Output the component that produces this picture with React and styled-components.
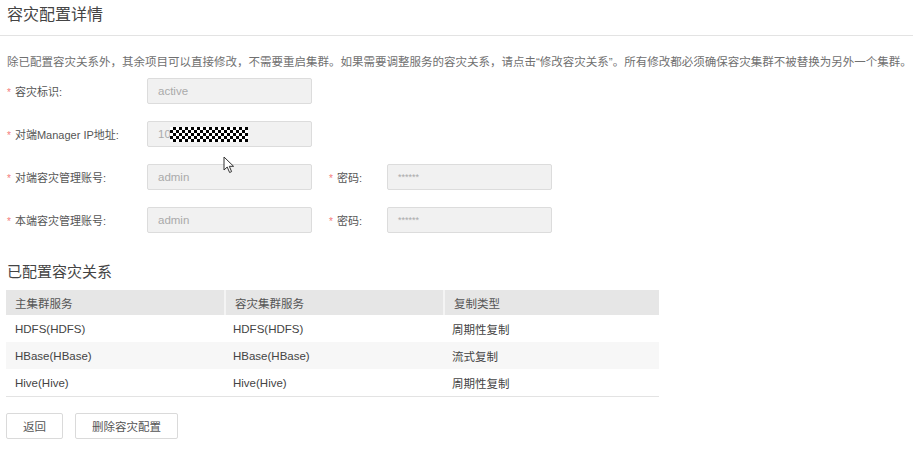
import React from "react";
import styled, { createGlobalStyle } from "styled-components";

const GlobalStyle = createGlobalStyle`
  html, body {
    margin: 0;
    padding: 0;
    background: #ffffff;
  }
  body {
    font-family: "Liberation Sans", "Noto Sans CJK SC", Arial, sans-serif;
    color: #444;
  }
`;

const Page = styled.div`
  position: relative;
  width: 913px;
  height: 449px;
  overflow: hidden;
  background: #fff;
`;

const Header = styled.div`
  height: 35px;
  border-bottom: 1px solid #e3e3e3;
  padding-left: 7px;
  display: flex;
  align-items: center;
`;

const Title = styled.h1`
  margin: 0 0 10px 0;
  font-size: 16px;
  font-weight: normal;
  color: #444;
`;

const Body = styled.div`
  padding: 0 0 0 7px;
`;

const Desc = styled.p`
  margin: 18px 0 0 0;
  font-size: 11.5px;
  line-height: 16px;
  color: #707070;
  white-space: nowrap;
`;

const Form = styled.div`
  margin-top: 8px;
  display: flex;
  flex-direction: column;
  gap: 17px;
`;

const Row = styled.div`
  display: flex;
  align-items: center;
  height: 26px;
`;

const Field = styled.div`
  display: flex;
  align-items: center;
`;

const Label = styled.label`
  width: ${(p) => p.width}px;
  font-size: 11px;
  color: #555;
  display: flex;
  align-items: center;
  &::before {
    content: "*";
    color: #f47b7b;
    font-size: 10px;
    margin-right: 4px;
    position: relative;
    top: 1px;
  }
`;

const Input = styled.div`
  box-sizing: border-box;
  width: 165px;
  height: 26px;
  background: #f1f1f1;
  border: 1px solid #dcdcdc;
  border-radius: 2px;
  padding-left: 10px;
  display: flex;
  align-items: center;
  font-size: ${(p) => (p.masked ? 9 : 11.5)}px;
  color: #aaa;
  margin-right: ${(p) => p.gap || 0}px;
`;

const Mosaic = styled.span`
  display: inline-block;
  width: 78px;
  height: 15px;
  margin-left: -1px;
  background-color: #fff;
  background-image: repeating-conic-gradient(#000 0 25%, #fff 0 50%);
  background-size: 6px 6px;
`;

const Cursor = styled.svg`
  position: absolute;
  left: 223px;
  top: 156px;
`;

const SectionTitle = styled.h2`
  margin: 29px 0 0 0;
  font-size: 15px;
  line-height: 20px;
  font-weight: normal;
  color: #444;
`;

const Table = styled.div`
  margin-top: 8px;
  width: 653px;
  margin-left: -1px;
  border-bottom: 1px solid #e3e3e3;
`;

const TRow = styled.div`
  display: grid;
  grid-template-columns: 218px 219px 216px;
  height: ${(p) => (p.head ? 25 : 27)}px;
  background: ${(p) => (p.head ? "#e6e6e6" : p.striped ? "#f7f7f7" : "#fff")};
`;

const Cell = styled.div`
  display: flex;
  align-items: center;
  padding-left: 9px;
  font-size: 11.5px;
  color: ${(p) => (p.head ? "#555" : "#444")};
  border-left: ${(p) => (p.head && !p.first ? "2px solid #f4f4f4" : "none")};
`;

const Actions = styled.div`
  margin-top: 16px;
  display: flex;
  gap: 12px;
  margin-left: -1px;
`;

const Button = styled.button`
  box-sizing: border-box;
  height: 26px;
  padding: 0 16px;
  background: #fff;
  border: 1px solid #dadada;
  border-radius: 2px;
  font-family: "Liberation Sans", "Noto Sans CJK SC", sans-serif;
  font-size: 11.5px;
  color: #555;
`;

const rows = [
  ["HDFS(HDFS)", "HDFS(HDFS)", "周期性复制"],
  ["HBase(HBase)", "HBase(HBase)", "流式复制"],
  ["Hive(Hive)", "Hive(Hive)", "周期性复制"],
];

export default function App() {
  return (
    <Page>
      <GlobalStyle />
      <Header>
        <Title>容灾配置详情</Title>
      </Header>
      <Body>
        <Desc>
          除已配置容灾关系外，其余项目可以直接修改，不需要重启集群。如果需要调整服务的容灾关系，请点击“修改容灾关系”。所有修改都必须确保容灾集群不被替换为另外一个集群。
        </Desc>
        <Form>
          <Row>
            <Label width={140}>容灾标识:</Label>
            <Input>active</Input>
          </Row>
          <Row>
            <Label width={140}>对端Manager IP地址:</Label>
            <Input>
              10
              <Mosaic />
            </Input>
          </Row>
          <Row>
            <Field>
              <Label width={140}>对端容灾管理账号:</Label>
              <Input gap={17}>admin</Input>
            </Field>
            <Field>
              <Label width={58}>密码:</Label>
              <Input masked>******</Input>
            </Field>
          </Row>
          <Row>
            <Field>
              <Label width={140}>本端容灾管理账号:</Label>
              <Input gap={17}>admin</Input>
            </Field>
            <Field>
              <Label width={58}>密码:</Label>
              <Input masked>******</Input>
            </Field>
          </Row>
        </Form>
        <SectionTitle>已配置容灾关系</SectionTitle>
        <Table>
          <TRow head>
            <Cell head first>主集群服务</Cell>
            <Cell head>容灾集群服务</Cell>
            <Cell head>复制类型</Cell>
          </TRow>
          {rows.map((r, i) => (
            <TRow key={i} striped={i === 1}>
              {r.map((c, j) => (
                <Cell key={j}>{c}</Cell>
              ))}
            </TRow>
          ))}
        </Table>
        <Actions>
          <Button>返回</Button>
          <Button>删除容灾配置</Button>
        </Actions>
      </Body>
      <Cursor width="13" height="18" viewBox="0 0 13 18">
        <path
          d="M1 1 L1 14 L4.2 11 L6.6 16.5 L8.6 15.6 L6.3 10.3 L10.6 10.3 Z"
          fill="#fff"
          stroke="#333"
          strokeWidth="1"
          strokeLinejoin="round"
        />
      </Cursor>
    </Page>
  );
}
